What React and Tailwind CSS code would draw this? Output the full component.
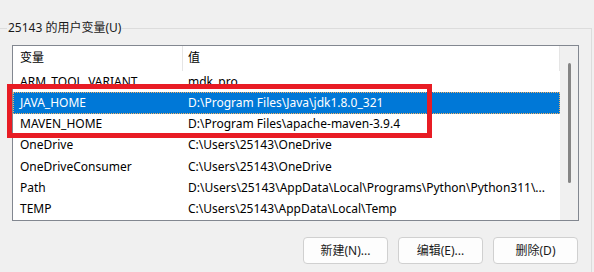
import React from "react";

const rows = [
  { name: "ARM_TOOL_VARIANT", value: "mdk_pro" },
  { name: "JAVA_HOME", value: "D:\\Program Files\\Java\\jdk1.8.0_321", selected: true },
  { name: "MAVEN_HOME", value: "D:\\Program Files\\apache-maven-3.9.4" },
  { name: "OneDrive", value: "C:\\Users\\25143\\OneDrive" },
  { name: "OneDriveConsumer", value: "C:\\Users\\25143\\OneDrive" },
  { name: "Path", value: "D:\\Users\\25143\\AppData\\Local\\Programs\\Python\\Python311\\..." },
  { name: "TEMP", value: "C:\\Users\\25143\\AppData\\Local\\Temp" },
];

const font = {
  fontFamily: '"Noto Sans", "Noto Sans CJK SC", sans-serif',
};

const App = () => {
  return (
    <div
      className="relative w-[594px] h-[272px] overflow-hidden bg-[#f0f0f0] text-[12px] text-black"
      style={font}
    >
      <fieldset className="ml-[-4px] mt-[19px] w-[594px] h-[300px] border border-[#dcdcdc] pl-[15px] pr-[12px] pt-[8px]">
        <legend className="ml-[-5px] px-[1px] leading-[18px] text-[#1a1a1a]">
          25143 的用户变量(U)
        </legend>

        {/* list view */}
        <div className="flex h-[176px] w-[567px] border border-[#828790] bg-white">
          <div className="flex-1 flex flex-col">
            <div className="flex h-[25px] items-center">
              <div className="w-[170px] h-full flex items-center pl-[7px] border-r border-[#e5e5e5]">
                变量
              </div>
              <div className="flex-1 h-full flex items-center pl-[5px] border-r border-[#e5e5e5]">
                值
              </div>
            </div>
            {rows.map((row) => (
              <div
                key={row.name}
                className={`flex h-[21.3px] items-center whitespace-nowrap ${
                  row.selected
                    ? "bg-[#0078d7] text-white border border-dotted border-[#f5b060]"
                    : ""
                }`}
              >
                <div className={`w-[170px] ${row.selected ? "pl-[6px]" : "pl-[7px]"}`}>
                  {row.name}
                </div>
                <div className={`flex-1 ${row.selected ? "pl-[4px]" : "pl-[5px]"}`}>
                  {row.value}
                </div>
              </div>
            ))}
          </div>
          {/* scrollbar */}
          <div className="w-[18px] bg-[#f0f0f0] flex justify-center pt-[17px]">
            <div className="w-[3px] h-[120px] rounded-full bg-[#858585]" />
          </div>
        </div>

        <div className="flex justify-end gap-[10px] mt-[16px] w-[566px]">
          {["新建(N)...", "编辑(E)...", "删除(D)"].map((label) => (
            <button
              key={label}
              className="w-[85px] h-[27px] rounded-[4px] border border-[#d0d0d0] bg-[#fdfdfd] text-[12px] text-[#1a1a1a]"
            >
              {label}
            </button>
          ))}
        </div>
      </fieldset>

      {/* red annotation box */}
      <div className="absolute left-[7px] top-[84px] w-[425px] h-[54px] border-[5px] border-[#e81c24]" />
    </div>
  );
};

export default App;
